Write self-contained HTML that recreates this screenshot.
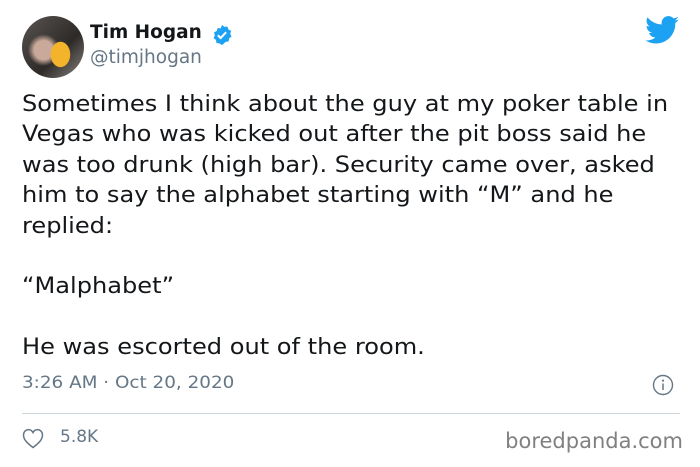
<!DOCTYPE html>
<html><head><style>
body{margin:0;width:700px;height:467px;background:#fff;font-family:"DejaVu Sans",sans-serif;position:relative;overflow:hidden}
.a{position:absolute}
</style></head><body>
<div class="a" style="left:22px;top:16px;width:62px;height:62px;border-radius:50%;background:radial-gradient(ellipse 10px 13px at 62% 62%,#f3b32a 0 95%,transparent 100%),radial-gradient(circle at 35% 55%,#c9a99a 0 18%,transparent 30%),linear-gradient(135deg,#5a5552,#2d2a28 60%,#8a8580);"></div>
<div class="a" style="left:90px;top:22px;font-weight:bold;font-size:18.5px;color:#14171a">Tim Hogan</div>
<svg class="a" style="left:211px;top:24px" width="22" height="22" viewBox="0 0 24 24"><path fill="#1da1f2" d="M12 1l2.6 2.1 3.3-.4 1 3.2 3 1.6-.9 3.2 1.4 3-2.7 2-.4 3.3-3.3.5L12 23l-2.8-1.8-3.3-.5-.4-3.3-2.7-2 1.4-3-.9-3.2 3-1.6 1-3.2 3.3.4z"/><path d="M7.5 12.3l3 3 6-6.3" stroke="#fff" stroke-width="2.2" fill="none"/></svg>
<div class="a" style="left:90px;top:47px;font-size:18.5px;color:#657786">@timjhogan</div>
<svg class="a" style="left:645px;top:16px" width="34" height="28" viewBox="0 0 24 20"><path fill="#1da1f2" d="M24 2.4c-.9.4-1.8.7-2.8.8 1-.6 1.8-1.6 2.2-2.7-1 .6-2 1-3.1 1.2C19.3.7 18 .1 16.6.1c-2.7 0-4.9 2.2-4.9 4.9 0 .4 0 .8.1 1.1C7.7 5.9 4.1 4 1.7 1 1.2 1.7 1 2.6 1 3.5c0 1.7.9 3.2 2.2 4.1-.8 0-1.6-.2-2.2-.6v.1c0 2.4 1.7 4.4 3.9 4.8-.4.1-.8.2-1.3.2-.3 0-.6 0-.9-.1.6 2 2.4 3.4 4.6 3.4-1.7 1.3-3.8 2.1-6.1 2.1-.4 0-.8 0-1.2-.1 2.2 1.4 4.8 2.2 7.5 2.2 9.1 0 14-7.5 14-14v-.6c1-.7 1.8-1.6 2.5-2.6z"/></svg>
<div class="a" style="left:22px;top:90px;width:700px;font-size:21.8px;line-height:30.4px;color:#14171a;transform:scaleX(1.105);transform-origin:0 0;white-space:nowrap">Sometimes I think about the guy at my poker table in<br>Vegas who was kicked out after the pit boss said he<br>was too drunk (high bar). Security came over, asked<br>him to say the alphabet starting with “M” and he<br>replied:<br><br>“Malphabet”<br><br>He was escorted out of the room.</div>
<div class="a" style="left:22px;top:373px;font-size:17px;color:#657786;transform:scaleX(1.08);transform-origin:0 0;white-space:nowrap">3:26 AM · Oct 20, 2020</div>
<svg class="a" style="left:652px;top:374px" width="22" height="22" viewBox="0 0 22 22"><circle cx="11" cy="11" r="9.5" fill="none" stroke="#657786" stroke-width="1.4"/><circle cx="11" cy="6.6" r="1.1" fill="#657786"/><path d="M11 9.5v6.5" stroke="#657786" stroke-width="1.5"/></svg>
<div class="a" style="left:22px;top:413px;width:658px;height:1px;background:#ccd6dd"></div>
<svg class="a" style="left:22px;top:428px" width="22" height="21" viewBox="0 0 22 21"><path d="M11 19.5C5 15 1.5 11.5 1.5 7 1.5 4 3.8 1.6 6.5 1.6c2 0 3.6 1.2 4.5 3 .9-1.8 2.5-3 4.5-3 2.7 0 5 2.4 5 5.4 0 4.5-3.5 8-9.5 12.5z" fill="none" stroke="#657786" stroke-width="1.5"/></svg>
<div class="a" style="left:60px;top:427px;font-size:17px;color:#657786">5.8K</div>
<div class="a" style="right:17px;top:429px;font-size:21px;color:#808080">boredpanda.com</div>
</body></html>
